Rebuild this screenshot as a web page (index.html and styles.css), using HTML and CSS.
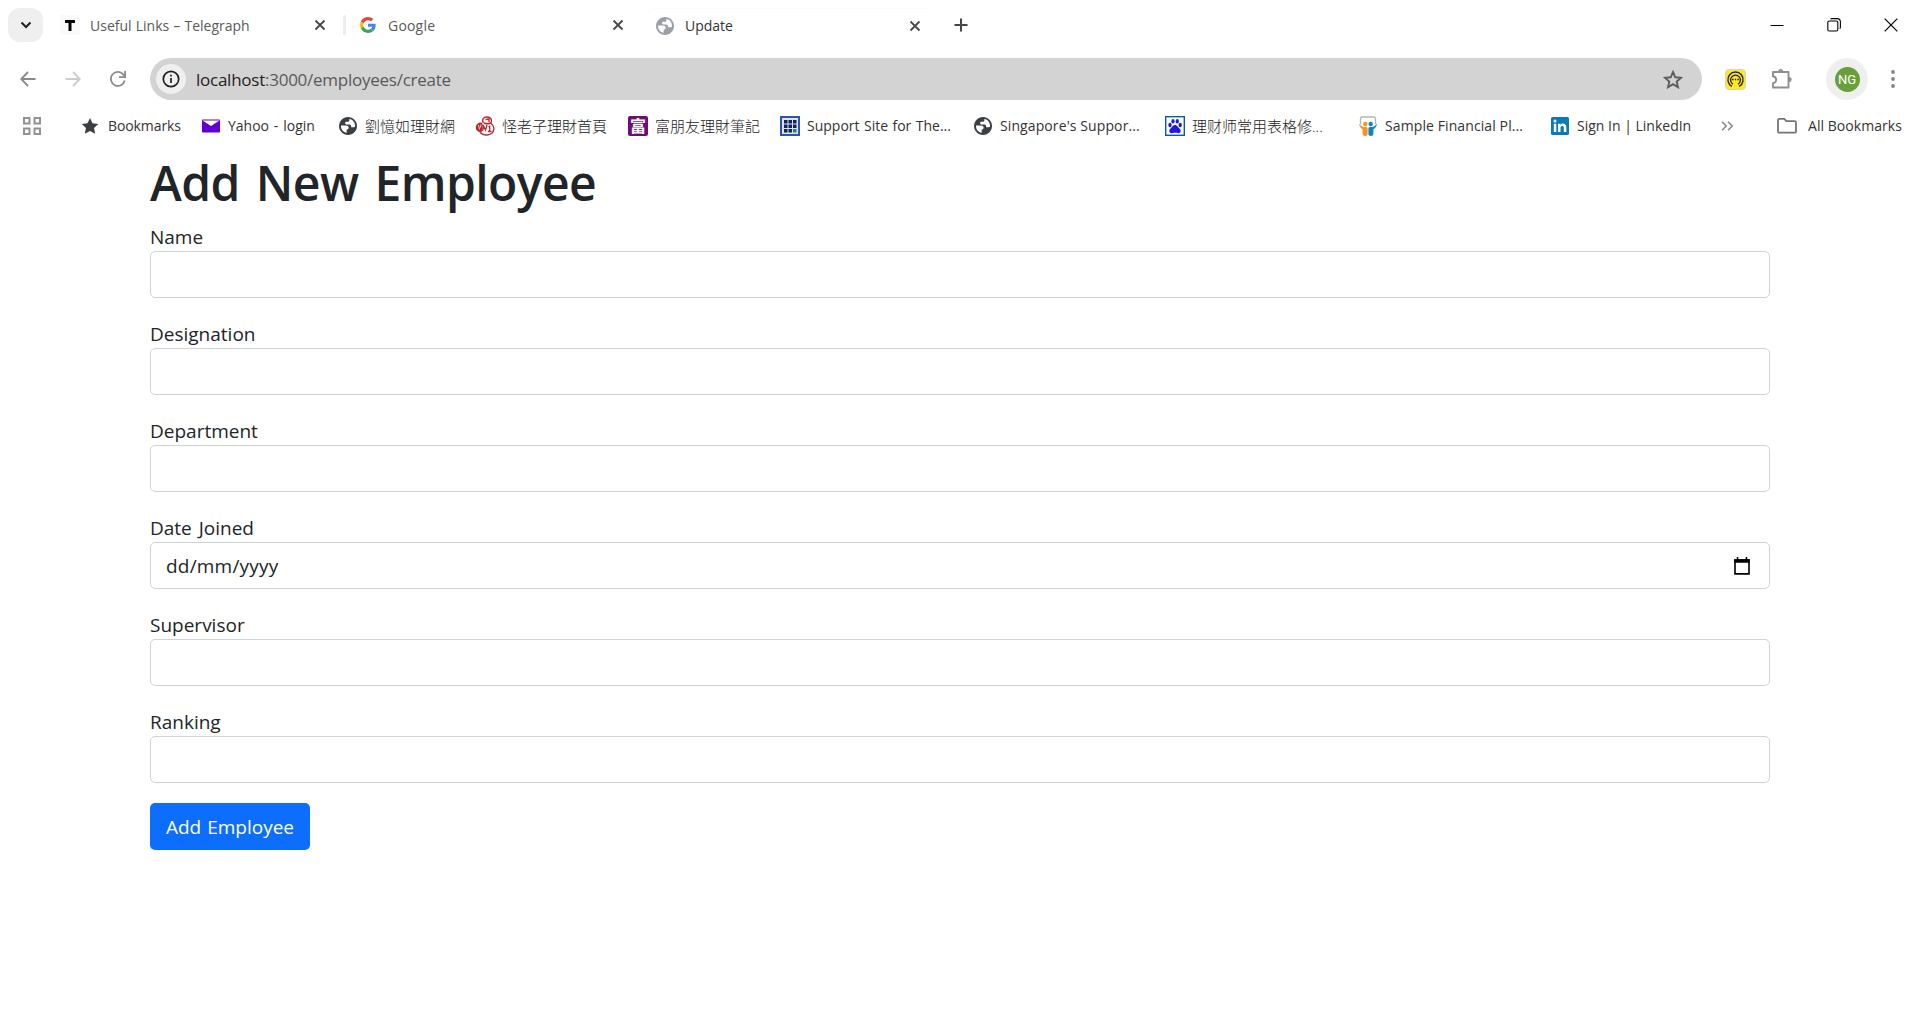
FILE: index.html
```html
<!DOCTYPE html>
<html lang="en">
<head>
<meta charset="utf-8">
<title>Update</title>
<link rel="stylesheet" href="styles.css">
</head>
<body>
<svg class="defs" aria-hidden="true">
  <symbol id="close" viewBox="0 0 12 12"><path d="M1.5 1.5l9 9M10.5 1.5l-9 9" fill="none" stroke="currentColor" stroke-width="1.8"/></symbol>
  <symbol id="globe" viewBox="2 2 20 20"><path fill="currentColor" d="M12 2C6.480 2 2 6.480 2 12s4.480 10 10 10 10-4.480 10-10S17.520 2 12 2z"/><path fill="#fff" d="M4.200 11.500h5.300c2 0 3.200 1 3.200 2.500 0 1.300-.9 2-2.200 2v3.600C6.800 19 4 16 4.200 11.500zM13.500 4.200v1.300c0 1.100-.9 1.700-2 1.700h-1.200c-1 0-1.500.6-1.500 1.500 0 1 .7 1.500 1.500 1.500h3.200c1.200 0 2 .9 2 2.100v1.200h2.700c.8 0 1.100-.3 1.700-.6.200-5-2.600-8-6.400-8.700z"/></symbol>
</svg>

<header class="browser">
  <div class="tabs">
    <button class="tab-search"><svg width="12" height="8" viewBox="0 0 12 8"><path d="M1.500 1.500L6 6l4.500-4.500" fill="none" stroke="#222" stroke-width="2"/></svg></button>
    <div class="tab tab-first">
      <span class="fav-t"><svg width="10" height="11" viewBox="0 0 10 11"><path d="M0 0h10v3H6.500v8h-3V3H0z"/></svg></span>
      <span class="title">Useful Links – Telegraph</span>
      <svg class="x"><use href="#close"/></svg>
    </div>
    <div class="tab tab-google">
      <svg width="16" height="16" viewBox="0 0 48 48"><path fill="#ea4335" d="M24 9.500c3.540 0 6.710 1.220 9.210 3.600l6.850-6.850C35.900 2.380 30.470 0 24 0 14.620 0 6.510 5.380 2.560 13.220l7.980 6.190C12.430 13.720 17.740 9.500 24 9.500z"/><path fill="#4285f4" d="M46.980 24.550c0-1.570-.15-3.090-.38-4.550H24v9.020h12.940c-.58 2.960-2.260 5.480-4.780 7.180l7.730 6c4.510-4.180 7.090-10.360 7.090-17.650z"/><path fill="#fbbc05" d="M10.530 28.590c-.48-1.450-.76-2.990-.76-4.590s.27-3.140.76-4.590l-7.980-6.190C.92 16.460 0 20.120 0 24s.92 7.540 2.560 10.780l7.970-6.190z"/><path fill="#34a853" d="M24 48c6.480 0 11.930-2.130 15.890-5.810l-7.730-6c-2.150 1.450-4.920 2.300-8.160 2.300-6.260 0-11.570-4.220-13.470-9.910l-7.980 6.190C6.510 42.620 14.620 48 24 48z"/></svg>
      <span class="title">Google</span>
      <svg class="x"><use href="#close"/></svg>
    </div>
    <div class="tab tab-active">
      <svg class="tab-globe"><use href="#globe"/></svg>
      <span class="title">Update</span>
      <svg class="x"><use href="#close"/></svg>
    </div>
    <svg class="plus" width="14" height="14" viewBox="0 0 14 14"><path d="M7 .5v13M.5 7h13" stroke="#474747" stroke-width="2"/></svg>
    <div class="window-controls">
      <svg width="14" height="14" viewBox="0 0 14 14"><path d="M.5 7.500h13" stroke="#000"/></svg>
      <svg width="14" height="14" viewBox="0 0 14 14"><g fill="none" stroke="#000" stroke-width="1.100"><rect x=".8" y="3" width="10" height="10" rx="1.500"/><path d="M3.500 1.200c.3-.4.700-.6 1.200-.6H10c2 0 3.400 1.400 3.400 3.400v5.200c0 .6-.2 1-.7 1.400"/></g></svg>
      <svg width="14" height="14" viewBox="0 0 14 14"><path d="M.7.7l12.600 12.600M13.300.7L.7 13.300" stroke="#000" stroke-width="1.200"/></svg>
    </div>
  </div>

  <div class="toolbar">
    <div class="nav">
      <svg width="16" height="16" viewBox="0 0 16 16"><path d="M15.500 8H1.700M8 1L1.200 8 8 15" fill="none" stroke="#8a8a8a" stroke-width="1.800"/></svg>
      <svg width="16" height="16" viewBox="0 0 16 16"><path d="M.5 8h13.800M8 1l6.800 7L8 15" fill="none" stroke="#cdcdcd" stroke-width="1.800"/></svg>
      <svg width="16" height="16" viewBox="0 0 16 16"><path d="M14.700 9.500A7 7 0 1 1 13.400 3.600L15 5.500" fill="none" stroke="#8a8a8a" stroke-width="1.800"/><path d="M15.100 0v6.200H8.900" fill="none" stroke="#8a8a8a" stroke-width="1.800"/></svg>
    </div>
    <div class="address">
      <span class="info"><svg width="18" height="18" viewBox="0 0 18 18"><circle cx="9" cy="9" r="7.700" fill="none" stroke="#1f1f1f" stroke-width="1.700"/><path d="M9 8v5M9 4.800v1.800" stroke="#1f1f1f" stroke-width="1.700"/></svg></span>
      <span class="url"><b>localhost</b>:3000/employees/create</span>
      <svg class="star" width="20" height="19" viewBox="0 0 20 19"><path d="M10 2l2.300 5.300 5.700.5-4.300 3.800 1.300 5.600-5-3-5 3 1.300-5.600L2 7.800l5.700-.5z" fill="none" stroke="#5c5c5c" stroke-width="1.900"/></svg>
    </div>
    <div class="actions">
      <svg class="ext" width="21" height="21" viewBox="0 0 21 21"><rect x=".5" y=".5" width="20" height="20" rx="3.500" fill="#ffeb1c" stroke="#d3d3d3"/><g fill="none" stroke="#222"><path d="M6.800 17.300a7.600 7.600 0 1 1 7.400 0" stroke-width="1.400"/><path d="M8 15.300a4.900 4.900 0 1 1 5 0" stroke-width="1.300"/></g><path d="M7 10.500h7" stroke="#222" stroke-width="1.300" stroke-dasharray="1.500 1.200"/></svg>
      <svg class="puzzle" width="22" height="22" viewBox="0 0 22 22"><path d="M2 4h15.500v15.500H2v-4.200c2.200-.5 3.200-1.700 3.200-3.500S4.200 8.700 2 8.200z" fill="none" stroke="#8e8e8e" stroke-width="1.900" stroke-linejoin="round"/><path d="M7.500 4a2.200 2.600 0 0 1 4.400 0zM17.500 9.200a2.700 2.300 0 0 1 0 4.600z" fill="#8e8e8e" stroke="#8e8e8e"/></svg>
      <span class="profile"><span class="avatar">NG</span></span>
      <svg class="menu" width="4" height="18" viewBox="0 0 4 18"><g fill="#858585"><circle cx="2" cy="2" r="1.900"/><circle cx="2" cy="9" r="1.900"/><circle cx="2" cy="16" r="1.900"/></g></svg>
    </div>
  </div>

  <nav class="bookmarks">
    <svg class="apps" width="18" height="18" viewBox="0 0 18 18"><g fill="none" stroke="#929292" stroke-width="2"><rect x="1" y="1" width="5.500" height="5.500"/><rect x="11.500" y="1" width="5.500" height="5.500"/><rect x="1" y="11.500" width="5.500" height="5.500"/><rect x="11.500" y="11.500" width="5.500" height="5.500"/></g></svg>
    <a class="bm"><svg viewBox="0 0 20 20"><path fill="#3c4043" d="M9 2l2.500 5.300 5.800.7-4.300 3.900 1.200 5.800L9 14.900l-5.200 2.800L5 11.900.7 8l5.800-.7z"/></svg><span>Bookmarks</span></a>
    <a class="bm"><svg viewBox="0 0 20 20"><rect x="1" y="3.500" width="18" height="13" rx=".8" fill="#6001d2"/><path d="M1.500 4.500h17L10 10z" fill="#fff"/></svg><span class="yahoo">Yahoo - login</span></a>
    <a class="bm"><svg class="g" viewBox="0 0 20 20"><use href="#globe" x="1" y="1" width="18" height="18"/></svg><span class="cjk">劉憶如理財網</span></a>
    <a class="bm"><svg viewBox="0 0 20 20"><g fill="none" stroke="#b3292e" stroke-width="1.400"><path d="M8.500 7C6.500 3.500 8.500 1 12 1c3.800 0 5.500 3 3.800 6.200 4 2.800 4 7.800.7 10.300-3.500 2.500-9 1.800-11.500-1"/><path d="M10.500 3.500l3.500-.5v3M9 7c2 1 4.500 1 6.500 0"/><path d="M7.500 15l1-5 2 4 1.500-5M13.500 11l1.200-.8v5.300M13 15.500h3.500" stroke-width="1.300"/></g><path d="M.8 12C.5 8.500 3 6.500 6.500 6.500L8 9l-1.500 7.500C3 16 1.200 14.500.8 12z" fill="#b3292e"/><path d="M3.500 9l1 4.500M6 8.500l-.5 3" stroke="#fff" stroke-width=".8"/></svg><span class="cjk">怪老子理財首頁</span></a>
    <a class="bm"><span class="fu">富</span><span class="cjk">富朋友理財筆記</span></a>
    <a class="bm"><svg viewBox="0 0 20 20"><path fill="#2b55b5" d="M0 0h20v20H0z"/><path fill="#e3e3dc" d="M2 2h16v16H2z"/><g fill="#08226b"><path d="M4 4h3.500v3.500H4zM8.500 4H12v3.500H8.500zM13 4h3.500v3.500H13zM4 8.500h3.500V12H4zM8.500 8.500H12V12H8.500zM13 8.500h3.500V12H13zM4 13h3.500v3.500H4zM8.500 13H12v3.500H8.500z"/></g><path fill="#118b89" d="M13 13h3.500v3.500H13z"/></svg><span class="support">Support Site for The...</span></a>
    <a class="bm"><svg class="g" viewBox="0 0 20 20"><use href="#globe" x="1" y="1" width="18" height="18"/></svg><span class="singapore">Singapore's Suppor...</span></a>
    <a class="bm"><svg viewBox="0 0 20 20"><rect x=".7" y=".7" width="18.600" height="18.600" fill="#fff" stroke="#0759b5" stroke-width="1.400"/><g fill="#2319dc"><ellipse cx="5" cy="9" rx="1.700" ry="2.200"/><ellipse cx="8" cy="5.300" rx="1.600" ry="2.200"/><ellipse cx="12.300" cy="5.300" rx="1.600" ry="2.200"/><ellipse cx="15.200" cy="9" rx="1.700" ry="2.200"/><path d="M10 9c2 0 3 2.200 4.500 3.500 2.200 2 1.200 4.700-1 4.700-1.500 0-2-.4-3.500-.4s-2 .4-3.500.4c-2.200 0-3.200-2.700-1-4.700C7 11.200 8 9 10 9z"/></g></svg><span class="cjk cjk-sc">理财师常用表格修...</span></a>
    <a class="bm"><svg viewBox="0 0 20 20"><path d="M2.500 8.500V3c0-1.300.5-2 1.700-2h11.600c1.200 0 1.700.7 1.700 2v5.500" fill="#fff" stroke="#b5b5b8" stroke-width="1.300"/><g fill="#f6921e"><circle cx="7.300" cy="8" r="2.200"/><path d="M1 7.800c1.800 2.500 3.500 3.300 6 3.300 1.500 0 2.600.3 2.600 1.700v5c0 1.500-1 2.200-2.500 2.200-1.800 0-2.500-1-2.500-2.500v-4.300C2.700 12.200 1.200 10.500 1 7.800z"/></g><g fill="#0c86cb"><circle cx="12.700" cy="8" r="2.200"/><path d="M19 7.800c-1.800 2.500-3.500 3.300-6 3.300-1.500 0-2.600.3-2.600 1.700v5c0 1.500 1 2.200 2.500 2.200 1.800 0 2.500-1 2.500-2.500v-4.300c1.900-1 3.400-2.700 3.600-5.400z"/></g></svg><span class="sample">Sample Financial Pl...</span></a>
    <a class="bm"><svg viewBox="0 0 20 20"><rect x="1" y="1" width="18" height="18" rx="1.500" fill="#0a7bba"/><path fill="#fff" d="M3.800 7.800h2.500v8.200H3.800zM8 7.800h2.400v1.100c1.500-2.200 5.900-1.700 5.900 2.300V16h-2.500v-4.200c0-2.400-3.300-2.200-3.300 0V16H8z"/><circle cx="5" cy="5" r="1.500" fill="#fff"/></svg><span class="signin">Sign In | LinkedIn</span></a>
    <svg class="more" width="13" height="10" viewBox="0 0 13 10"><path d="M1 .8L5.200 5 1 9.200M7 .8L11.200 5 7 9.200" fill="none" stroke="#8a8a8a" stroke-width="1.600"/></svg>
    <a class="bm all"><svg viewBox="0 0 20 20"><path d="M1 4.200c0-.8.500-1.300 1.300-1.300h5l2 2.200h8.400c.8 0 1.300.5 1.300 1.300v9c0 .8-.5 1.300-1.300 1.300H2.300c-.8 0-1.300-.5-1.300-1.300z" fill="none" stroke="#757575" stroke-width="1.800"/></svg><span>All Bookmarks</span></a>
  </nav>
</header>

<main class="container">
  <h1>Add New Employee</h1>
  <form>
    <div class="group"><label for="name">Name</label><input id="name" type="text"></div>
    <div class="group"><label for="designation">Designation</label><input id="designation" type="text"></div>
    <div class="group"><label for="department">Department</label><input id="department" type="text"></div>
    <div class="group"><label>Date Joined</label>
      <div class="date"><span>dd/mm/yyyy</span><svg width="16" height="18" viewBox="0 0 16 18"><path d="M1 3h14v13.900H1z" fill="none" stroke="#000" stroke-width="1.600"/><path d="M.2 2.200h15.600v3.500H.2zM2.800 0h1.500v3H2.800zM11.700 0h1.500v3h-1.500z"/></svg></div>
    </div>
    <div class="group"><label for="supervisor">Supervisor</label><input id="supervisor" type="text"></div>
    <div class="group"><label for="ranking">Ranking</label><input id="ranking" type="text"></div>
    <button class="submit" type="button">Add Employee</button>
  </form>
</main>
</body>
</html>
```

FILE: styles.css
```css
* { box-sizing: border-box; }
body {
  margin: 0;
  background: #fff;
  color: #212529;
  font-family: "Open Sans", "Noto Sans", "Noto Sans CJK TC", sans-serif;
  overflow: hidden;
}
svg { display: block; flex: none; }
button { border: 0; font-family: inherit; }
.defs { width: 0; height: 0; position: absolute; }

/* Tab strip */
.browser { height: 151px; }
.tabs { display: flex; align-items: center; height: 50px; padding-left: 8px; }
.tab-search {
  display: flex; align-items: center; justify-content: center;
  width: 35px; height: 34px; padding: 0; border-radius: 12px; background: #efefef;
}
.tab { display: flex; align-items: center; height: 34px; color: #5a5a5a; }
.title { flex: 1; padding-top: 1px; font-size: 14px; line-height: 20px; word-spacing: .5px; white-space: nowrap; }
.x { width: 12px; height: 12px; color: #474747; }
.tab-first { width: 302px; padding: 0 19px 0 17px; gap: 10px; }
.fav-t { display: flex; align-items: center; justify-content: center; width: 20px; height: 20px; background: #fafafa; }
.tab-google { width: 300px; padding: 0 21px 0 15px; gap: 12px; position: relative; }
.tab-google .title { letter-spacing: .2px; }
.tab-google::before { content: ""; position: absolute; left: -2px; top: 7px; width: 3px; height: 20px; border-radius: 2px; background: #ededed; }
.tab-active {
  width: 291px; padding: 0 15px 0 11px; gap: 11px; color: #333;
  border-top: 1px solid #fafafa; border-radius: 12px 12px 0 0;
}
.tab-active .title { padding-top: 0; }
.tab-globe { width: 18px; height: 18px; color: #9aa0a6; }
.plus { margin-left: 18px; }
.window-controls { display: flex; gap: 43px; margin-left: auto; padding-right: 22px; }

/* Toolbar */
.toolbar { display: flex; align-items: center; height: 42px; margin-top: 8px; }
.nav { display: flex; gap: 29px; width: 150px; padding-left: 20px; }
.address {
  display: flex; align-items: center; width: 1552px; height: 42px;
  padding: 0 19px 0 6px; border-radius: 21px; background: #d3d3d3;
}
.info { display: flex; align-items: center; justify-content: center; width: 30px; height: 30px; border-radius: 50%; background: #efefef; }
.url { margin-left: 10px; font-size: 17px; letter-spacing: -.25px; color: #5a5a5a; }
.url b { font-weight: 400; color: #1f1f1f; }
.star { margin-left: auto; }
.actions { display: flex; align-items: center; padding-left: 23px; }
.puzzle { margin-left: 25px; }
.profile { display: flex; align-items: center; justify-content: center; width: 42px; height: 42px; margin-left: 33px; border-radius: 50%; background: #efefef; }
.avatar { display: flex; align-items: center; justify-content: center; width: 25px; height: 25px; border-radius: 50%; background: #689f38; color: #fff; font: 400 13px Roboto, sans-serif; }
.menu { margin-left: 23px; }

/* Bookmarks bar */
.bookmarks {
  display: grid; align-items: center; height: 51px;
  grid-template-columns: 58px 120px 137px 137px 153px 152px 193px 192px 193px 192px 171px 56px 1fr;
  padding-left: 23px;
}
.bm { display: flex; align-items: center; gap: 7px; font-size: 14px; line-height: 20px; letter-spacing: -.1px; color: #333; white-space: nowrap; }
.bm svg { width: 20px; height: 20px; }
.bm .g { color: #3c4043; }
.yahoo { letter-spacing: 0; word-spacing: 1.2px; }
.support { letter-spacing: 0; word-spacing: .8px; }
.singapore { letter-spacing: .1px; }
.sample { letter-spacing: .1px; }
.signin { letter-spacing: 0; }
.bm .cjk { font-size: 15px; letter-spacing: 0; font-family: "Open Sans", "Noto Sans CJK TC", sans-serif; font-weight: 300; color: #222; }
.bm .cjk-sc { font-family: "Open Sans", "Noto Sans CJK SC", sans-serif; }
.fu { width: 20px; height: 20px; border-radius: 2px; background: #740a78; color: #fff; font: 700 16px/19px "Noto Sans CJK TC", sans-serif; letter-spacing: 0; text-align: center; }
.all { gap: 11px; letter-spacing: .05px; }

/* Employee form */
.container { width: 1620px; margin: 0 auto; font-size: 19px; line-height: 30px; }
h1 { height: 60px; margin: 0 0 10px; padding-top: 2px; font-size: 48px; line-height: 60px; font-weight: 600; letter-spacing: -.55px; word-spacing: 4px; }
.group { height: 77px; margin-bottom: 20px; }
label { display: block; height: 30px; padding-top: 1px; word-spacing: 2px; }
input, .date { display: flex; width: 100%; height: 47px; border: 1px solid #ced4da; border-radius: 5px; background: #fff; }
.date { align-items: center; justify-content: space-between; padding: 0 19px 0 15px; }
.date span { padding-top: 1px; letter-spacing: .2px; }
.submit { width: 160px; height: 47px; padding: 1px 0 0; border-radius: 5px; background: #0d6efd; color: #fff; font-size: 19px; line-height: 30px; word-spacing: 1px; }
```
